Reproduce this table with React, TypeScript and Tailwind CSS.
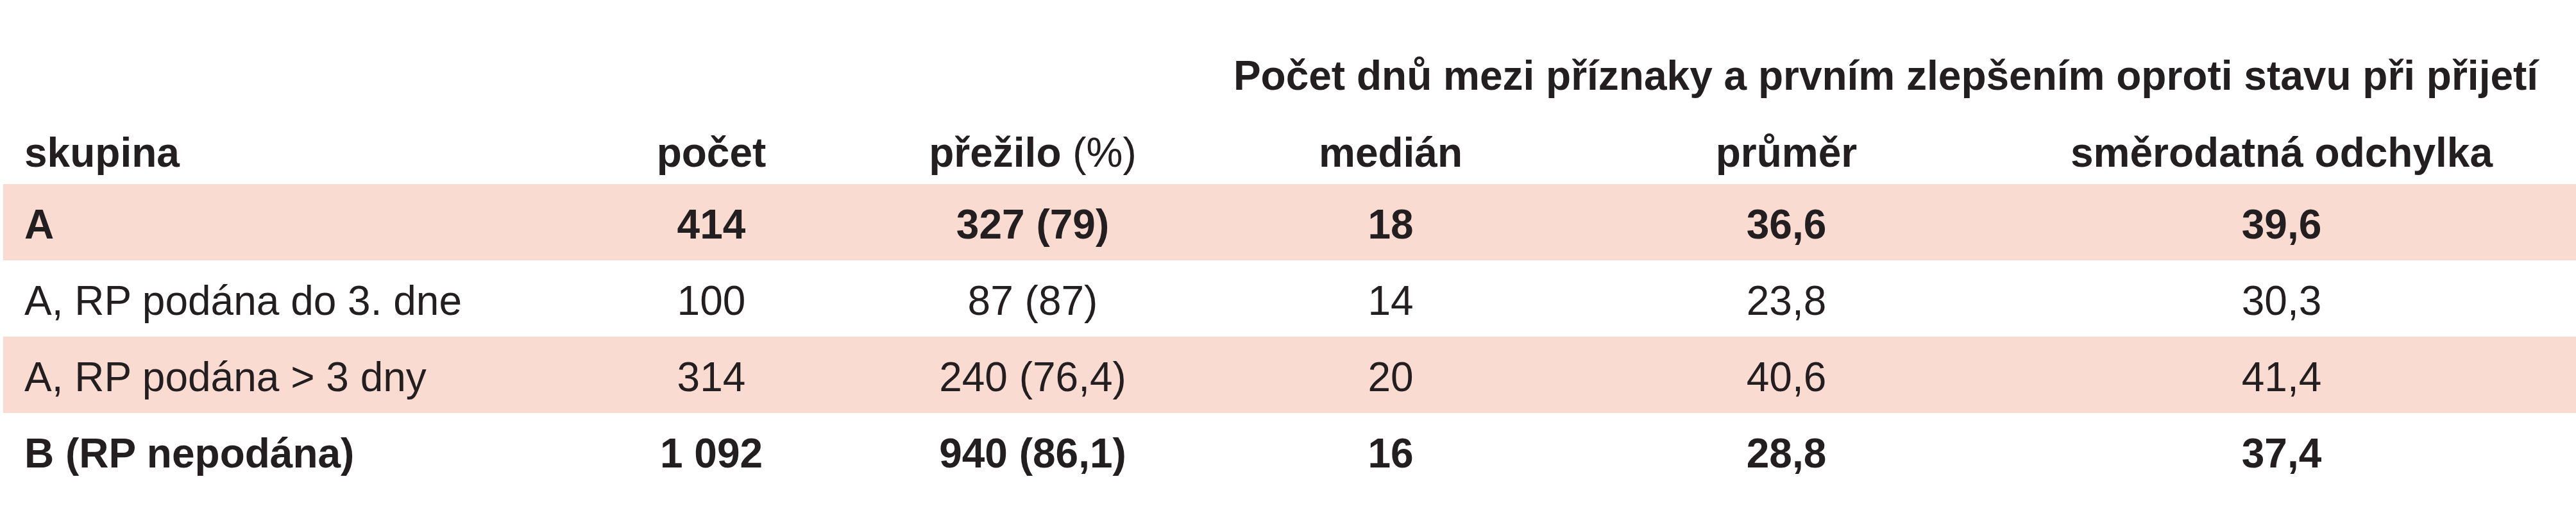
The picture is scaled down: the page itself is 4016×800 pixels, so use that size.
import React from "react";

type Row = {
  group: string;
  count: string;
  survived: string;
  median: string;
  mean: string;
  sd: string;
  bold: boolean;
  shaded: boolean;
};

const rows: Row[] = [
  { group: "A", count: "414", survived: "327 (79)", median: "18", mean: "36,6", sd: "39,6", bold: true, shaded: true },
  { group: "A, RP podána do 3. dne", count: "100", survived: "87 (87)", median: "14", mean: "23,8", sd: "30,3", bold: false, shaded: false },
  { group: "A, RP podána > 3 dny", count: "314", survived: "240 (76,4)", median: "20", mean: "40,6", sd: "41,4", bold: false, shaded: true },
  { group: "B (RP nepodána)", count: "1 092", survived: "940 (86,1)", median: "16", mean: "28,8", sd: "37,4", bold: true, shaded: false },
];

const App = () => {
  return (
    <div className="w-[4016px] h-[800px] bg-white text-[#231f20] font-['Liberation_Sans',Arial,sans-serif] text-[64px]">
      <table className="ml-[5px] w-[4011px] table-fixed border-collapse">
        <colgroup>
          <col className="w-[883px]" />
          <col className="w-[442px]" />
          <col className="w-[560px]" />
          <col className="w-[556px]" />
          <col className="w-[678px]" />
          <col className="w-[892px]" />
        </colgroup>
        <thead>
          <tr className="h-[178px]">
            <th colSpan={3}></th>
            <th
              colSpan={3}
              className="pt-[82px] pb-[24px] pr-[26px] leading-[72px] font-bold text-center whitespace-nowrap align-top"
            >
              Počet dnů mezi příznaky a prvním zlepšením oproti stavu při přijetí
            </th>
          </tr>
          <tr className="h-[109px] font-bold leading-[72px]">
            <th className="pl-[33px] pt-[24px] pb-[13px] text-left align-top font-bold">skupina</th>
            <th className="pt-[24px] pb-[13px] text-center align-top font-bold">počet</th>
            <th className="pt-[24px] pb-[13px] text-center align-top font-bold">
              přežilo <span className="font-normal">(%)</span>
            </th>
            <th className="pt-[24px] pb-[13px] text-center align-top font-bold">medián</th>
            <th className="pt-[24px] pb-[13px] text-center align-top font-bold">průměr</th>
            <th className="pt-[24px] pb-[13px] pr-[26px] text-center align-top font-bold whitespace-nowrap">
              směrodatná odchylka
            </th>
          </tr>
        </thead>
        <tbody>
          {rows.map((r) => (
            <tr
              key={r.group}
              className={
                (r.shaded ? "bg-[#fadbd1] " : "bg-white ") +
                (r.bold ? "font-bold " : "font-normal ") +
                "h-[119px] leading-[112px]"
              }
            >
              <td className="pl-[33px] pt-[6px] text-left whitespace-nowrap">{r.group}</td>
              <td className="pt-[6px] text-center">{r.count}</td>
              <td className="pt-[6px] text-center whitespace-nowrap">{r.survived}</td>
              <td className="pt-[6px] text-center">{r.median}</td>
              <td className="pt-[6px] text-center">{r.mean}</td>
              <td className="pt-[6px] pr-[26px] text-center">{r.sd}</td>
            </tr>
          ))}
        </tbody>
      </table>
    </div>
  );
};

export default App;
